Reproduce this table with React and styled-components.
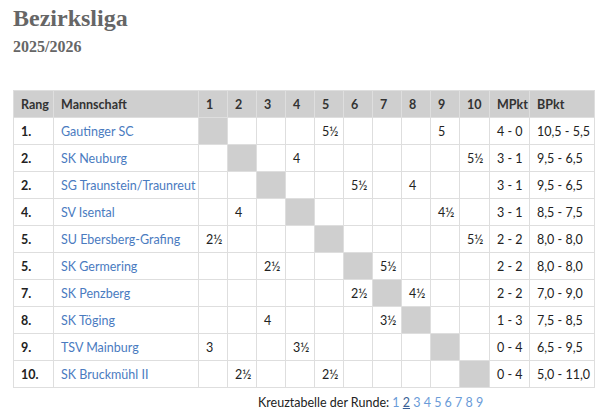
import React from "react";
import styled, { createGlobalStyle } from "styled-components";

const Global = createGlobalStyle`
  html, body { margin: 0; padding: 0; background: #fff; }
  body { font-family: "Lato", "Open Sans", sans-serif; }
`;

const Page = styled.div`
  padding: 0 5px 0 13px;
`;

const Title = styled.h1`
  font-family: "Liberation Serif", "Times New Roman", serif;
  font-size: 24px;
  font-weight: bold;
  color: #666;
  margin: 0;
  padding-top: 4px;
  line-height: 28px;
`;

const Season = styled.h2`
  font-family: "Liberation Serif", "Times New Roman", serif;
  font-size: 16px;
  font-weight: bold;
  color: #666;
  margin: 0;
  padding-top: 5px;
  line-height: 20px;
`;

const Table = styled.table`
  margin-top: 33px;
  border-collapse: collapse;
  table-layout: fixed;
  width: 581px;
  font-size: 12.5px;
  color: #222;
`;

const Th = styled.th`
  background: #cfcfcf;
  border: 1px solid #dedede;
  height: 26px;
  padding: 0 0 0 7px;
  text-align: left;
  font-weight: 700;
  color: #333;
  white-space: nowrap;
`;

const Td = styled.td`
  border: 1px solid #dedede;
  height: 26px;
  padding: 0 0 0 7px;
  text-align: left;
  white-space: nowrap;
  background: ${(p) => (p.$diag ? "#cfcfcf" : "#fff")};
  font-weight: ${(p) => (p.$bold ? 700 : 400)};
`;

const TeamLink = styled.a`
  color: #4a7bbf;
  text-decoration: none;
`;

const Footer = styled.div`
  margin-top: 7px;
  padding-left: 245px;
  font-size: 12.5px;
  color: #222;
`;

const RoundLink = styled.a`
  color: ${(p) => (p.$active ? "#3a5f96" : "#6a9bd8")};
  text-decoration: ${(p) => (p.$active ? "underline" : "none")};
`;

const rows = [
  ["1.", "Gautinger SC", { 5: "5½", 9: "5" }, "4 - 0", "10,5 - 5,5"],
  ["2.", "SK Neuburg", { 4: "4", 10: "5½" }, "3 - 1", "9,5 - 6,5"],
  ["2.", "SG Traunstein/Traunreut", { 6: "5½", 8: "4" }, "3 - 1", "9,5 - 6,5"],
  ["4.", "SV Isental", { 2: "4", 9: "4½" }, "3 - 1", "8,5 - 7,5"],
  ["5.", "SU Ebersberg-Grafing", { 1: "2½", 10: "5½" }, "2 - 2", "8,0 - 8,0"],
  ["5.", "SK Germering", { 3: "2½", 7: "5½" }, "2 - 2", "8,0 - 8,0"],
  ["7.", "SK Penzberg", { 6: "2½", 8: "4½" }, "2 - 2", "7,0 - 9,0"],
  ["8.", "SK Töging", { 3: "4", 7: "3½" }, "1 - 3", "7,5 - 8,5"],
  ["9.", "TSV Mainburg", { 1: "3", 4: "3½" }, "0 - 4", "6,5 - 9,5"],
  ["10.", "SK Bruckmühl II", { 2: "2½", 5: "2½" }, "0 - 4", "5,0 - 11,0"],
];

const cols = [1, 2, 3, 4, 5, 6, 7, 8, 9, 10];

export default function App() {
  return (
    <Page>
      <Global />
      <Title>Bezirksliga</Title>
      <Season>2025/2026</Season>
      <Table>
        <colgroup>
          <col style={{ width: 40 }} />
          <col style={{ width: 145 }} />
          {cols.map((c) => (
            <col key={c} style={{ width: c === 10 ? 30 : 29 }} />
          ))}
          <col style={{ width: 40 }} />
          <col style={{ width: 65 }} />
        </colgroup>
        <thead>
          <tr>
            <Th>Rang</Th>
            <Th>Mannschaft</Th>
            {cols.map((c) => (
              <Th key={c}>{c}</Th>
            ))}
            <Th>MPkt</Th>
            <Th>BPkt</Th>
          </tr>
        </thead>
        <tbody>
          {rows.map((r, i) => (
            <tr key={i}>
              <Td $bold>{r[0]}</Td>
              <Td>
                <TeamLink href="#">{r[1]}</TeamLink>
              </Td>
              {cols.map((c) => (
                <Td key={c} $diag={c === i + 1}>
                  {r[2][c] || ""}
                </Td>
              ))}
              <Td>{r[3]}</Td>
              <Td>{r[4]}</Td>
            </tr>
          ))}
        </tbody>
      </Table>
      <Footer>
        Kreuztabelle der Runde:{" "}
        {[1, 2, 3, 4, 5, 6, 7, 8, 9].map((n) => (
          <React.Fragment key={n}>
            {" "}
            <RoundLink href="#" $active={n === 2}>
              {n}
            </RoundLink>
          </React.Fragment>
        ))}
      </Footer>
    </Page>
  );
}
